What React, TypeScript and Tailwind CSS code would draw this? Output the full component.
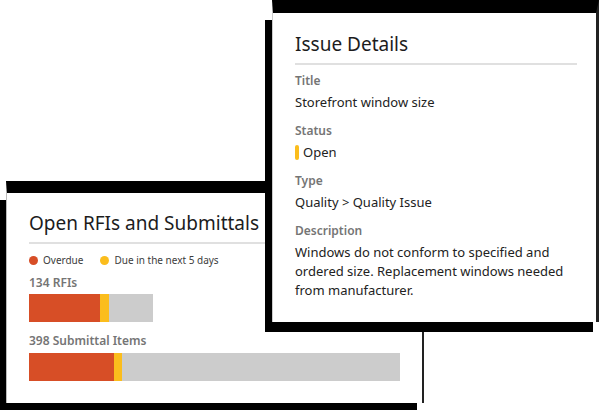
const FONT = "font-['Noto_Sans','Open_Sans',sans-serif]";

function Bar({ overdue, due, rest }: { overdue: number; due: number; rest: number }) {
  return (
    <div className="flex h-[28px]">
      <div className="bg-[#d74e26]" style={{ width: overdue }} />
      <div className="bg-[#fbbd1d]" style={{ width: due }} />
      <div className="bg-[#cccccc]" style={{ width: rest }} />
    </div>
  );
}

function Field({ label, children }: { label: string; children: React.ReactNode }) {
  return (
    <div className="flex flex-col gap-[3px]">
      <div className="text-[12px] leading-[16px] font-semibold text-[#757575]">{label}</div>
      {children}
    </div>
  );
}

export default function App() {
  return (
    <div className={`relative w-[600px] h-[410px] overflow-hidden bg-white ${FONT}`}>
      {/* left card */}
      <div className="absolute left-0 top-[200px] w-[417px] h-[215px] bg-black" />
      <div className="absolute left-[6px] top-[181px] w-[418px] h-[222px] bg-white border-t-[12px] border-t-black border-r-2 border-r-[#222] border-l border-l-[#bbb] pl-[22px] pt-[17px]">
        <div className="text-[19px] leading-[26px] text-[#1c1c1c] whitespace-nowrap">Open RFIs and Submittals</div>
        <div className="mt-[6px] h-[2px] w-[300px] bg-[#e0e0e0]" />
        <div className="mt-[8px] flex items-center h-[16px] text-[10px] text-[#3c3c3c]">
          <span className="w-[9px] h-[9px] rounded-full bg-[#d74e26]" />
          <span className="ml-[5px]">Overdue</span>
          <span className="ml-[17px] w-[9px] h-[9px] rounded-full bg-[#fbbd1d]" />
          <span className="ml-[5px]">Due in the next 5 days</span>
        </div>
        <div className="mt-[7px] text-[12px] leading-[16px] font-semibold text-[#757575]">134 RFIs</div>
        <div className="mt-[3px]">
          <Bar overdue={71} due={9} rest={44} />
        </div>
        <div className="mt-[11px] text-[12px] leading-[16px] font-semibold text-[#757575]">398 Submittal Items</div>
        <div className="mt-[4px]">
          <Bar overdue={85} due={8} rest={278} />
        </div>
      </div>

      {/* right card */}
      <div className="absolute left-[265px] top-[20px] w-[328px] h-[312px] bg-black" />
      <div className="absolute left-[272px] top-0 w-[327px] h-[322px] bg-white border-t-[13px] border-t-black border-r-[3px] border-r-[#222] border-l border-l-[#ccc] pl-[22px] pr-[20px] pt-[18px]">
        <div className="text-[19px] leading-[26px] text-[#1c1c1c]">Issue Details</div>
        <div className="mt-[6px] h-[2px] w-[282px] bg-[#e0e0e0]" />
        <div className="mt-[8px] flex flex-col gap-[11px] text-[13px] leading-[20px] text-[#222]">
          <Field label="Title">
            <div>Storefront window size</div>
          </Field>
          <Field label="Status">
            <div className="flex items-center">
              <span className="w-[4px] h-[15px] rounded-[2px] bg-[#fbbd1d]" />
              <span className="ml-[4px]">Open</span>
            </div>
          </Field>
          <Field label="Type">
            <div>Quality &gt; Quality Issue</div>
          </Field>
          <div className="flex flex-col gap-[4px]">
            <div className="text-[12px] leading-[16px] font-semibold text-[#757575]">Description</div>
            <div className="w-[282px] leading-[19px]">
              Windows do not conform to specified and ordered size. Replacement windows needed from manufacturer.
            </div>
          </div>
        </div>
      </div>
    </div>
  );
}
